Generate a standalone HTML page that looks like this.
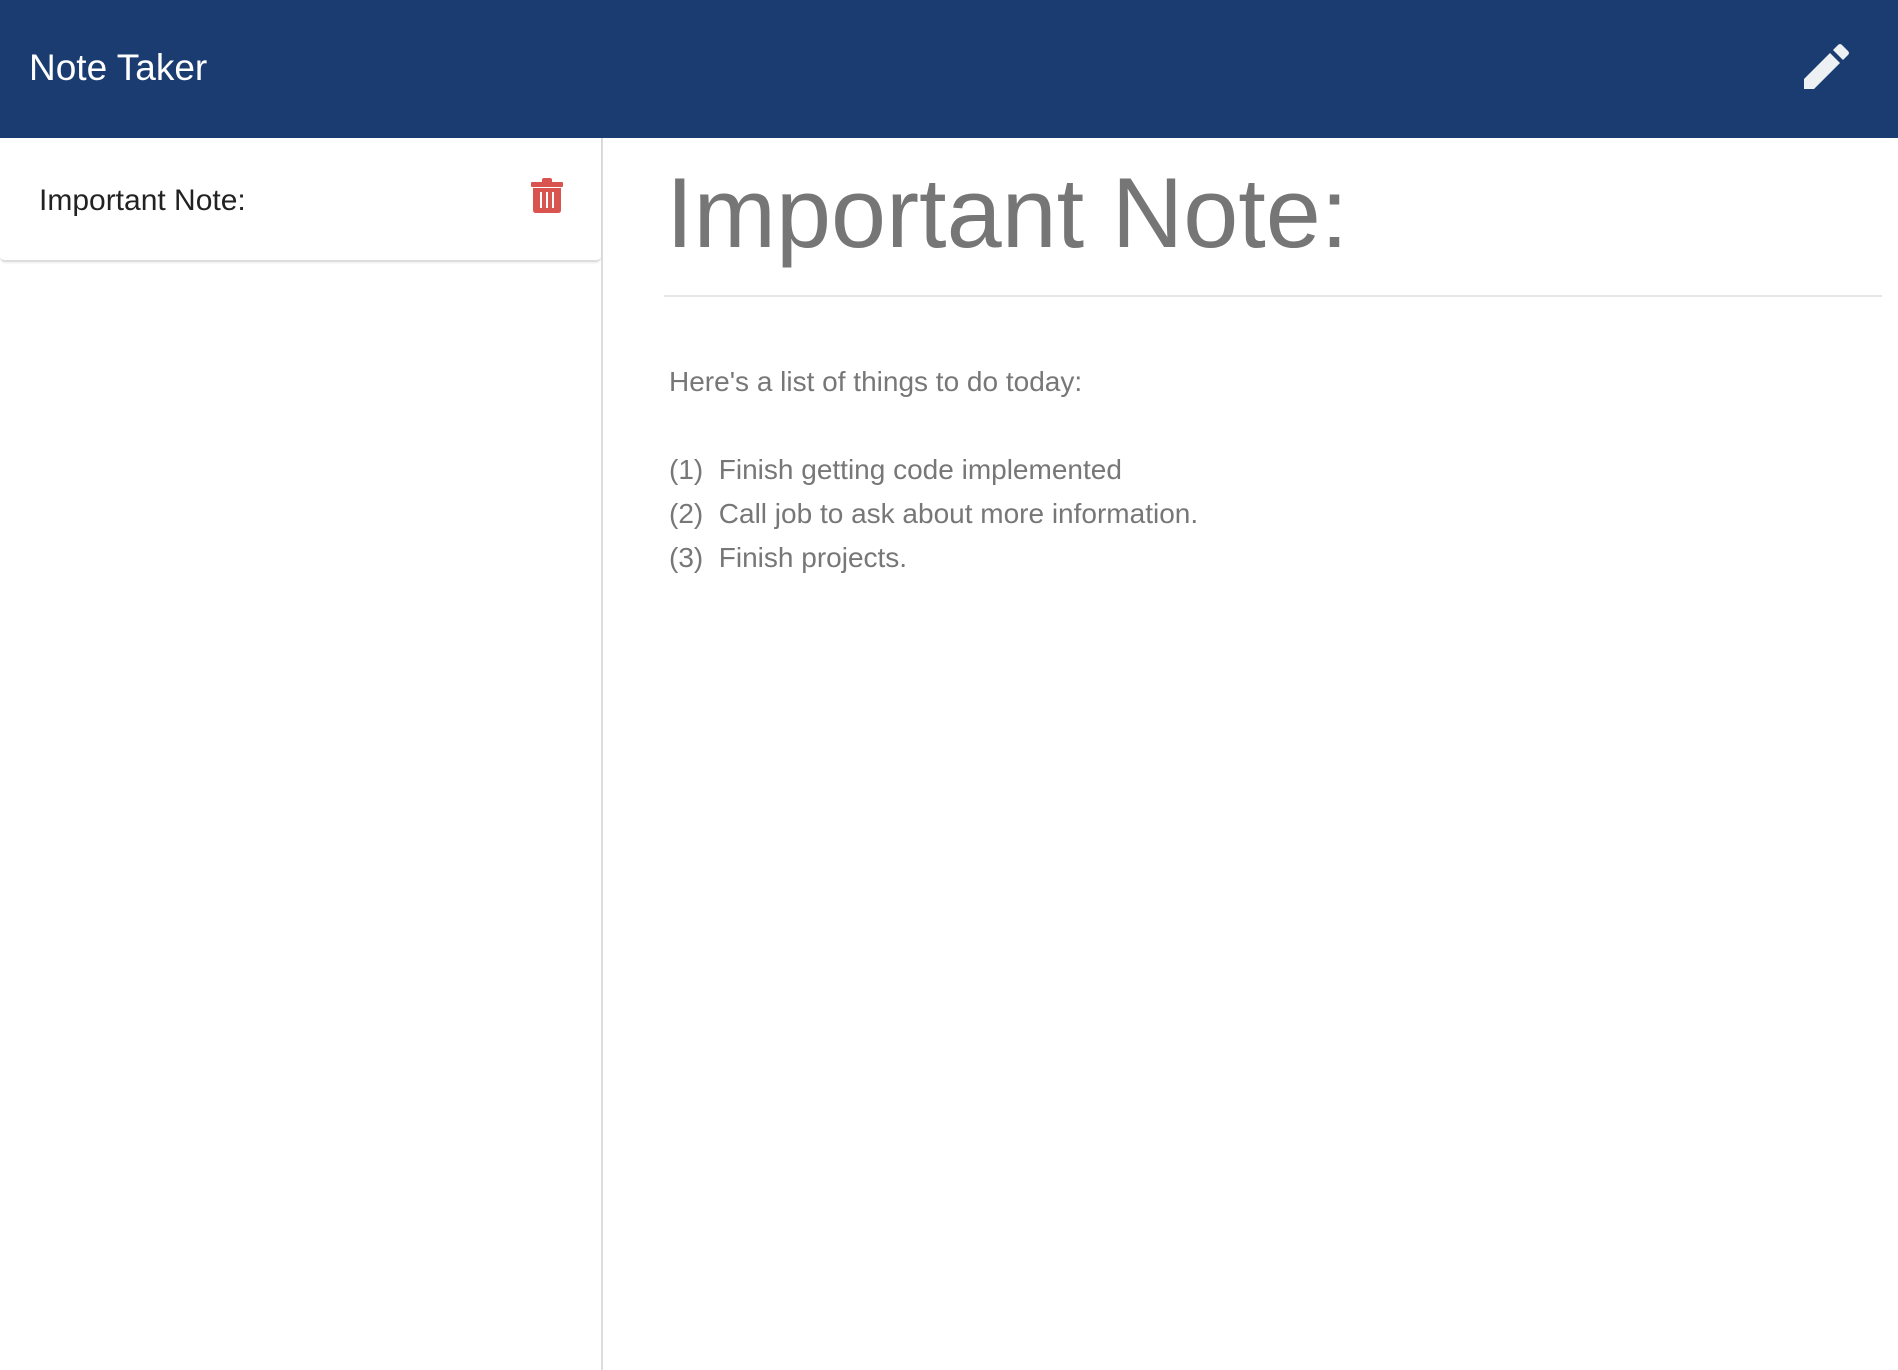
<!DOCTYPE html>
<html><head><meta charset="utf-8"><style>
*{margin:0;padding:0;box-sizing:border-box}
body{width:1898px;height:1370px;background:#fff;font-family:"Liberation Sans",sans-serif;position:relative;overflow:hidden}
.hdr{position:absolute;left:0;top:0;width:1898px;height:138px;background:#1b3c71}
.ttl{position:absolute;left:29px;top:46px;color:#fff;font-size:37px;line-height:44px}
.side{position:absolute;left:0;top:138px;width:603px;height:1232px;border-right:2px solid #ddd}
.card{position:absolute;left:0;top:138px;width:601px;height:124px;border-bottom:2px solid #ddd;border-radius:0 0 5px 5px;box-shadow:0 1px 2px rgba(0,0,0,.08)}
.st{position:absolute;left:39px;top:183px;font-size:30px;color:#222;line-height:36px}
.h1{position:absolute;left:666px;top:158px;font-size:99px;color:#767676;line-height:110px;white-space:nowrap}
.hr{position:absolute;left:664px;top:295px;width:1218px;height:2px;background:#e6e6e6}
.body{position:absolute;left:669px;top:360px;font-size:28px;color:#777;line-height:44px;white-space:pre}
</style></head><body>
<div class="hdr"><div class="ttl">Note Taker</div>
<svg style="position:absolute;left:1800px;top:41px" width="52" height="52" viewBox="0 0 52 52"><path d="M4 38 L30 12 L40 22 L14 48 L4 48 Z" fill="#eef1f4"/><path d="M33 9 L38 4 Q40 2 42 4 L48 10 Q50 12 48 14 L43 19 Z" fill="#eef1f4"/></svg>
</div>
<div class="side"></div>
<div class="card"></div>
<div class="st">Important Note:</div>
<svg style="position:absolute;left:531px;top:177px" width="32" height="36" viewBox="0 0 32 36"><rect x="0" y="5" width="32" height="5" rx="1" fill="#d9534f"/><rect x="11" y="1" width="10" height="6" rx="2" fill="#d9534f"/><path d="M2 11 H30 V33 Q30 36 27 36 H5 Q2 36 2 33 Z" fill="#d9534f"/><rect x="9" y="15" width="2" height="16" fill="#fff"/><rect x="15" y="15" width="2" height="16" fill="#fff"/><rect x="21" y="15" width="2" height="16" fill="#fff"/></svg>
<div class="h1">Important Note:</div>
<div class="hr"></div>
<div class="body">Here's a list of things to do today:

(1)  Finish getting code implemented
(2)  Call job to ask about more information.
(3)  Finish projects.</div>
</body></html>
